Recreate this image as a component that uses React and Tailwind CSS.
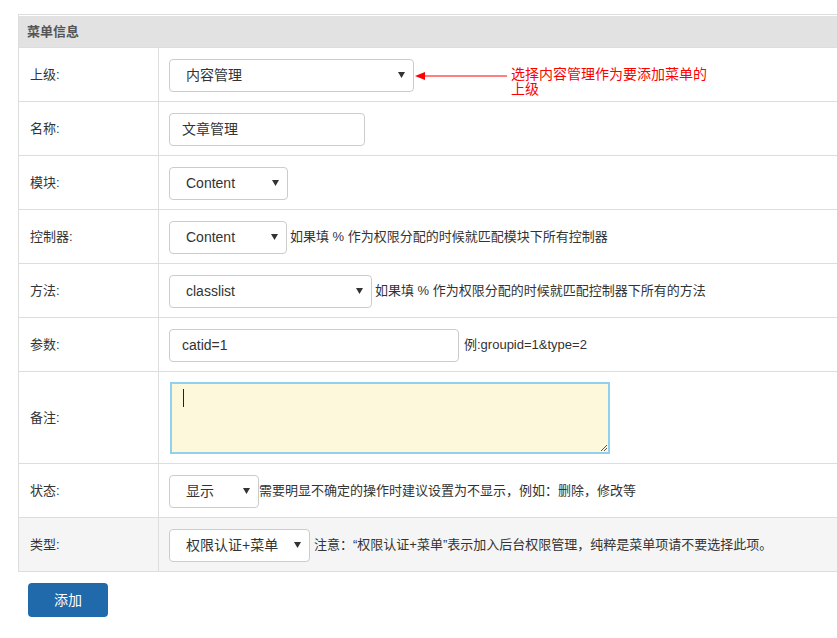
function Arrow() {
    return (
        <svg width="7" height="6" viewBox="0 0 7 6" className="shrink-0">
            <path d="M0 0 L7 0 L3.5 6 Z" fill="#333" />
        </svg>
    );
}

function Select({ value, width }) {
    return (
        <div className={`flex h-[33px] items-center justify-between rounded-[4px] border border-[#ccc] bg-white pl-4 pr-[8px] text-[14px] text-[#333] ${width}`}>
            <span>{value}</span>
            <Arrow />
        </div>
    );
}

function Input({ value, width }) {
    return (
        <div className={`flex h-[33px] items-center rounded-[4px] border border-[#ccc] bg-white pl-3 text-[14px] text-[#333] ${width}`}>
            {value}
        </div>
    );
}

function Row({ label, children, tall, shaded }) {
    return (
        <div className={`flex border-b border-[#ddd] ${shaded ? "bg-[#f5f5f5]" : "bg-white"}`}>
            <div className="flex w-[140px] shrink-0 items-center border-r border-[#ddd] pl-[11px] text-[13px] text-[#333]">
                {label}
            </div>
            <div className={`flex items-center pl-[10px] ${tall ? "pt-[10px] pb-[9px]" : "h-[53px] pt-px"}`}>
                {children}
            </div>
        </div>
    );
}

function Help({ children, gap = "ml-[3px]" }) {
    return <span className={`${gap} text-[13px] text-[#333] whitespace-nowrap`}>{children}</span>;
}

export default function App() {
    return (
        <div
            className="relative h-[638px] w-[837px] overflow-hidden bg-white"
            style={{ fontFamily: '"Liberation Sans", "Noto Sans CJK SC", sans-serif' }}
        >
            <div className="ml-[18px] mt-[14px] w-[840px] border-l border-t border-[#ddd]">
                <div className="border-b border-[#ddd] pt-px">
                    <div className="flex h-[31px] items-center bg-[#e2e2e2] pl-[8px] pt-px text-[13px] font-bold text-[#555]">
                        菜单信息
                    </div>
                </div>

                <Row label="上级:">
                    <Select value="内容管理" width="w-[245px]" />
                </Row>
                <Row label="名称:">
                    <Input value="文章管理" width="w-[196px]" />
                </Row>
                <Row label="模块:">
                    <Select value="Content" width="w-[119px]" />
                </Row>
                <Row label="控制器:">
                    <Select value="Content" width="w-[118px]" />
                    <Help>如果填 % 作为权限分配的时候就匹配模块下所有控制器</Help>
                </Row>
                <Row label="方法:">
                    <Select value="classlist" width="w-[203px]" />
                    <Help gap="ml-[3px]">如果填 % 作为权限分配的时候就匹配控制器下所有的方法</Help>
                </Row>
                <Row label="参数:">
                    <Input value="catid=1" width="w-[290px]" />
                    <Help gap="ml-[5px]">例:groupid=1&amp;type=2</Help>
                </Row>
                <Row label="备注:" tall>
                    <div className="relative ml-px h-[72px] w-[440px] border-2 border-[#8fd1ef] bg-[#fdf8dc]">
                        <div className="absolute left-[11px] top-[5px] h-[18px] w-px bg-[#222]" />
                        <svg width="8" height="8" viewBox="0 0 8 8" className="absolute bottom-0 right-0">
                            <path d="M7 1 L1 7 M7 4 L4 7" stroke="#555" strokeWidth="1" />
                        </svg>
                    </div>
                </Row>
                <Row label="状态:">
                    <Select value="显示" width="w-[90px]" />
                    <Help gap="ml-0">需要明显不确定的操作时建议设置为不显示，例如：删除，修改等</Help>
                </Row>
                <Row label="类型:" shaded>
                    <Select value="权限认证+菜单" width="w-[141px]" />
                    <Help gap="ml-[4px]">注意：“权限认证+菜单”表示加入后台权限管理，纯粹是菜单项请不要选择此项。</Help>
                </Row>
            </div>

            <button className="ml-[28px] mt-[11px] h-[34px] w-[80px] rounded-[4px] bg-[#2069ab] text-[14px] text-white">
                添加
            </button>

            {/* red annotation */}
            <div className="absolute left-[415px] top-[71px] flex items-center">
                <svg width="92" height="10" viewBox="0 0 92 10">
                    <path d="M0 5 L10 1 L10 9 Z" fill="#f00" />
                    <path d="M8 5 L92 5" stroke="#f00" strokeWidth="1" />
                </svg>
            </div>
            <div className="absolute left-[511px] top-[67px] w-[200px] text-[14px] leading-[15px] text-[#f00]">
                选择内容管理作为要添加菜单的上级
            </div>
        </div>
    );
}
